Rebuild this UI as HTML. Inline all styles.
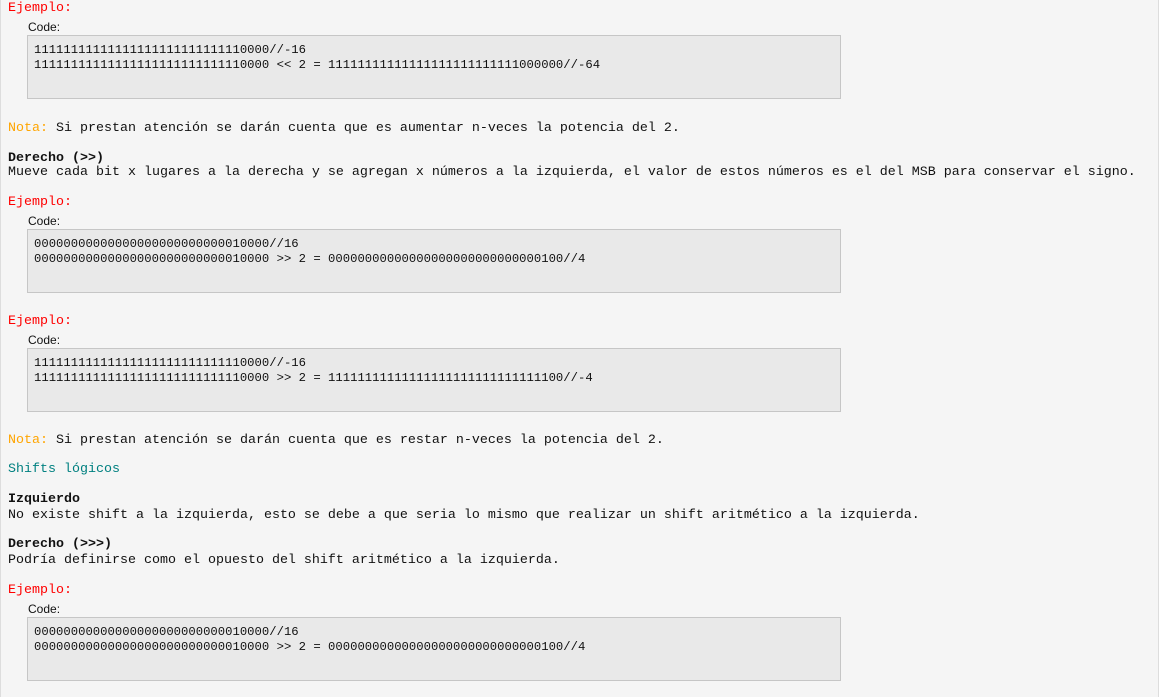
<!DOCTYPE html>
<html><head><meta charset="utf-8"><style>
html,body{margin:0;padding:0}
body{width:1159px;height:697px;background:#f5f5f5;position:relative;overflow:hidden;font-family:"Liberation Mono",monospace;font-size:13.33px;color:#111;border-left:1px solid #ddd;border-right:1px solid #ddd;box-sizing:border-box}
.t{position:absolute;left:7px;white-space:pre;line-height:15px;margin-top:1px}
.r{color:#f00}.o{color:#ffa500}.g{color:#008080}.b{font-weight:bold}
.c{position:absolute;left:27px;font-family:"Liberation Sans",sans-serif;font-size:12px;line-height:14px;margin-top:1px}
.box{position:absolute;left:26px;width:812px;height:62px;background:#e9e9e9;border:1px solid #c6c6c6;box-sizing:content-box}
.box pre{margin:0;position:absolute;left:6px;top:7px;font-family:"Liberation Mono",monospace;font-size:12.25px;line-height:15px;color:#111}
</style></head><body>
<div class="t r" style="top:0">Ejemplo:</div>
<div class="c" style="top:19px">Code:</div>
<div class="box" style="top:35px"><pre>11111111111111111111111111110000//-16
11111111111111111111111111110000 &lt;&lt; 2 = 11111111111111111111111111000000//-64</pre></div>
<div class="t" style="top:120px"><span class="o">Nota:</span> Si prestan atención se darán cuenta que es aumentar n-veces la potencia del 2.</div>
<div class="t b" style="top:150px">Derecho (&gt;&gt;)</div>
<div class="t" style="top:164px">Mueve cada bit x lugares a la derecha y se agregan x números a la izquierda, el valor de estos números es el del MSB para conservar el signo.</div>
<div class="t r" style="top:194px">Ejemplo:</div>
<div class="c" style="top:213px">Code:</div>
<div class="box" style="top:229px"><pre>00000000000000000000000000010000//16
00000000000000000000000000010000 &gt;&gt; 2 = 00000000000000000000000000000100//4</pre></div>
<div class="t r" style="top:313px">Ejemplo:</div>
<div class="c" style="top:332px">Code:</div>
<div class="box" style="top:348px"><pre>11111111111111111111111111110000//-16
11111111111111111111111111110000 &gt;&gt; 2 = 11111111111111111111111111111100//-4</pre></div>
<div class="t" style="top:432px"><span class="o">Nota:</span> Si prestan atención se darán cuenta que es restar n-veces la potencia del 2.</div>
<div class="t g" style="top:461px">Shifts lógicos</div>
<div class="t b" style="top:491px">Izquierdo</div>
<div class="t" style="top:507px">No existe shift a la izquierda, esto se debe a que seria lo mismo que realizar un shift aritmético a la izquierda.</div>
<div class="t b" style="top:536px">Derecho (&gt;&gt;&gt;)</div>
<div class="t" style="top:552px">Podría definirse como el opuesto del shift aritmético a la izquierda.</div>
<div class="t r" style="top:582px">Ejemplo:</div>
<div class="c" style="top:601px">Code:</div>
<div class="box" style="top:617px"><pre>00000000000000000000000000010000//16
00000000000000000000000000010000 &gt;&gt; 2 = 00000000000000000000000000000100//4</pre></div>
</body></html>
